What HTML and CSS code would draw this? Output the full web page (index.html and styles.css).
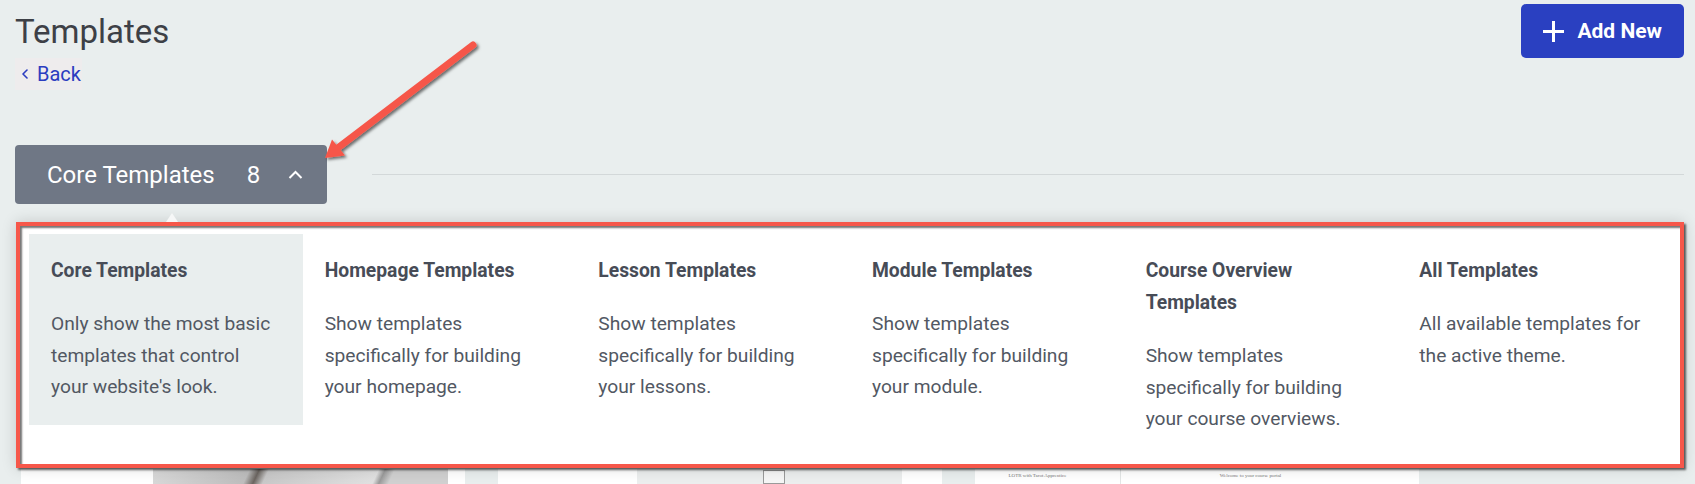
FILE: index.html
```html
<!DOCTYPE html>
<html lang="en">
<head>
<meta charset="utf-8">
<title>Templates</title>
<link rel="stylesheet" href="styles.css">
</head>
<body>
<div class="page">
  <header class="top">
    <div class="title-block">
      <h1 class="title">Templates</h1>
      <a class="back" href="#">
        <svg class="back-icon" width="6" height="10" viewBox="0 0 6 10"><polyline points="5,1 1,5 5,9" fill="none" stroke="currentColor" stroke-width="1.6" stroke-linecap="round" stroke-linejoin="round"/></svg>
        <span>Back</span>
      </a>
    </div>
    <button class="add-btn" type="button">
      <svg width="21" height="21" viewBox="0 0 21 21"><path d="M10.5 0v21M0 10.5h21" stroke="#fff" stroke-width="3"/></svg>
      <span>Add New</span>
    </button>
  </header>

  <div class="filter-row">
    <button class="filter-btn" type="button">
      <span class="filter-label">Core Templates</span>
      <span class="filter-count">8</span>
      <svg class="filter-chev" width="15" height="9" viewBox="0 0 15 9"><polyline points="1.5,8 7.5,2 13.5,8" fill="none" stroke="#fff" stroke-width="2"/></svg>
    </button>
    <div class="rule"></div>
  </div>

  <div class="panel">
    <div class="item active">
      <div class="item-title">Core Templates</div>
      <div class="item-desc">Only show the most basic templates that control your website's look.</div>
    </div>
    <div class="item">
      <div class="item-title">Homepage Templates</div>
      <div class="item-desc">Show templates specifically for building your homepage.</div>
    </div>
    <div class="item">
      <div class="item-title">Lesson Templates</div>
      <div class="item-desc">Show templates specifically for building your lessons.</div>
    </div>
    <div class="item">
      <div class="item-title">Module Templates</div>
      <div class="item-desc">Show templates specifically for building your module.</div>
    </div>
    <div class="item">
      <div class="item-title">Course Overview Templates</div>
      <div class="item-desc">Show templates specifically for building your course overviews.</div>
    </div>
    <div class="item">
      <div class="item-title">All Templates</div>
      <div class="item-desc">All available templates for the active theme.</div>
    </div>
  </div>

  <div class="cards">
    <div class="card card-a"><div class="thumb thumb-a"></div></div>
    <div class="card card-b"><div class="thumb thumb-b"><span class="film"></span></div></div>
    <div class="card card-c"><div class="thumb thumb-c"><span class="tiny">LOTR with Tarot Apprentice</span></div><div class="thumb thumb-c2"><span class="tiny">Welcome to your course portal</span></div></div>
  </div>
</div>

<svg class="annotation" width="1695" height="484" viewBox="0 0 1695 484">
  <defs>
    <filter id="sh" x="-20%" y="-20%" width="140%" height="140%">
      <feDropShadow dx="2" dy="2" stdDeviation="1.5" flood-color="#000" flood-opacity="0.55"/>
    </filter>
  </defs>
  <g filter="url(#sh)">
    <line x1="473" y1="45" x2="339" y2="147" stroke="#f6574a" stroke-width="7" stroke-linecap="round"/>
    <polygon points="325,158 345,155.5 332,139.5" fill="#f6574a"/>
  </g>
</svg>
</body>
</html>
```

FILE: styles.css
```css
* { box-sizing: border-box; }

html, body {
  margin: 0;
  padding: 0;
  background: #e9eeee;
  font-family: Roboto, "Liberation Sans", Arial, sans-serif;
  overflow: hidden;
}

.page {
  padding: 0 11px 0 15px;
  height: 484px;
  overflow: hidden;
}

.top {
  display: flex;
  justify-content: space-between;
  align-items: flex-start;
}

.title-block {
  display: flex;
  flex-direction: column;
  align-items: flex-start;
  padding-top: 12px;
}

.title {
  margin: 0;
  font-size: 33px;
  line-height: 40px;
  font-weight: 400;
  color: #3d4046;
}

.back {
  margin-top: 6px;
  height: 32px;
  display: inline-flex;
  align-items: center;
  gap: 9px;
  padding: 0 1px 0 7px;
  background: #eeeced;
  color: #2b3cc0;
  font-size: 20px;
  line-height: 32px;
  text-decoration: none;
}

.back-icon { display: block; }

.add-btn {
  margin-top: 4px;
  height: 54px;
  display: flex;
  align-items: center;
  gap: 13px;
  padding: 0 22px;
  border: none;
  border-radius: 5px;
  background: #2a40c1;
  color: #fff;
  font-family: inherit;
  font-size: 21px;
  font-weight: 700;
}

.add-btn svg { display: block; }

.filter-row {
  margin-top: 55px;
  display: flex;
  align-items: center;
}

.filter-btn {
  width: 312px;
  height: 59px;
  display: flex;
  align-items: center;
  padding: 0 24px 0 32px;
  border: none;
  border-radius: 4px;
  background: #6f7785;
  color: #fff;
  font-family: inherit;
  font-size: 24px;
  font-weight: 400;
}

.filter-count { margin-left: 32px; }
.filter-chev { margin-left: auto; display: block; }

.rule {
  flex: 1;
  height: 1px;
  margin-left: 45px;
  background: #d3d8d9;
}

.panel {
  position: relative;
  margin: 18px 0 0 1px;
  background: #fff;
  border: 4px solid #f6574a;
  padding: 8px 9px 7px;
  display: grid;
  grid-template-columns: repeat(6, 1fr);
  align-items: start;
  box-shadow: 0 0 14px rgba(0, 0, 0, 0.16), 2px 2px 2px rgba(0, 0, 0, 0.6), inset 2px 2px 2px rgba(0, 0, 0, 0.55);
  z-index: 2;
}

.panel::before {
  content: "";
  position: absolute;
  top: -13px;
  left: 146px;
  border-left: 6px solid transparent;
  border-right: 6px solid transparent;
  border-bottom: 9px solid #f6f7f7;
}

.item {
  padding: 21px 22px 22px;
}

.item.active { background: #e9eeee; }

.item-title {
  font-size: 19.3px;
  font-weight: 700;
  line-height: 32px;
  color: #474c57;
  margin-bottom: 21px;
}

.item-desc {
  font-size: 19.2px;
  line-height: 31.5px;
  color: #525863;
}

.cards {
  display: flex;
  gap: 33px;
  margin-top: 1px;
  padding-left: 6px;
}

.card {
  width: 444px;
  height: 60px;
  background: #fff;
  display: flex;
}

.card-a { padding-left: 132px; }
.card-b { padding-left: 139px; }
.card-c { padding-left: 7px; gap: 27px; }

.thumb {
  height: 100%;
  position: relative;
  overflow: hidden;
}

.thumb-a {
  width: 295px;
  background: linear-gradient(115deg, #d9d9d9 0%, #bdbdbd 30%, #6b6560 33%, #c8c8c8 36%, #e0e0e0 70%, #9a9a9a 72%, #d0d0d0 75%);
}

.thumb-b {
  width: 265px;
  background: #eceeee;
  display: flex;
  justify-content: center;
}

.film {
  margin-top: 1px;
  margin-left: 8px;
  width: 22px;
  height: 14px;
  border: 1px solid #9a9a9a;
  background: #f6f6f6;
}

.thumb-c {
  width: 111px;
  background: #fff;
  display: flex;
  justify-content: center;
}

.thumb-c2 {
  width: 260px;
  background: #fff;
  border-left: 1px solid #e3e6e6;
  display: flex;
  justify-content: center;
}

.tiny {
  margin-top: 4px;
  font-family: "Liberation Serif", serif;
  font-size: 5px;
  color: #777;
  white-space: nowrap;
}

.annotation {
  position: absolute;
  left: 0;
  top: 0;
  pointer-events: none;
  z-index: 5;
}
```
